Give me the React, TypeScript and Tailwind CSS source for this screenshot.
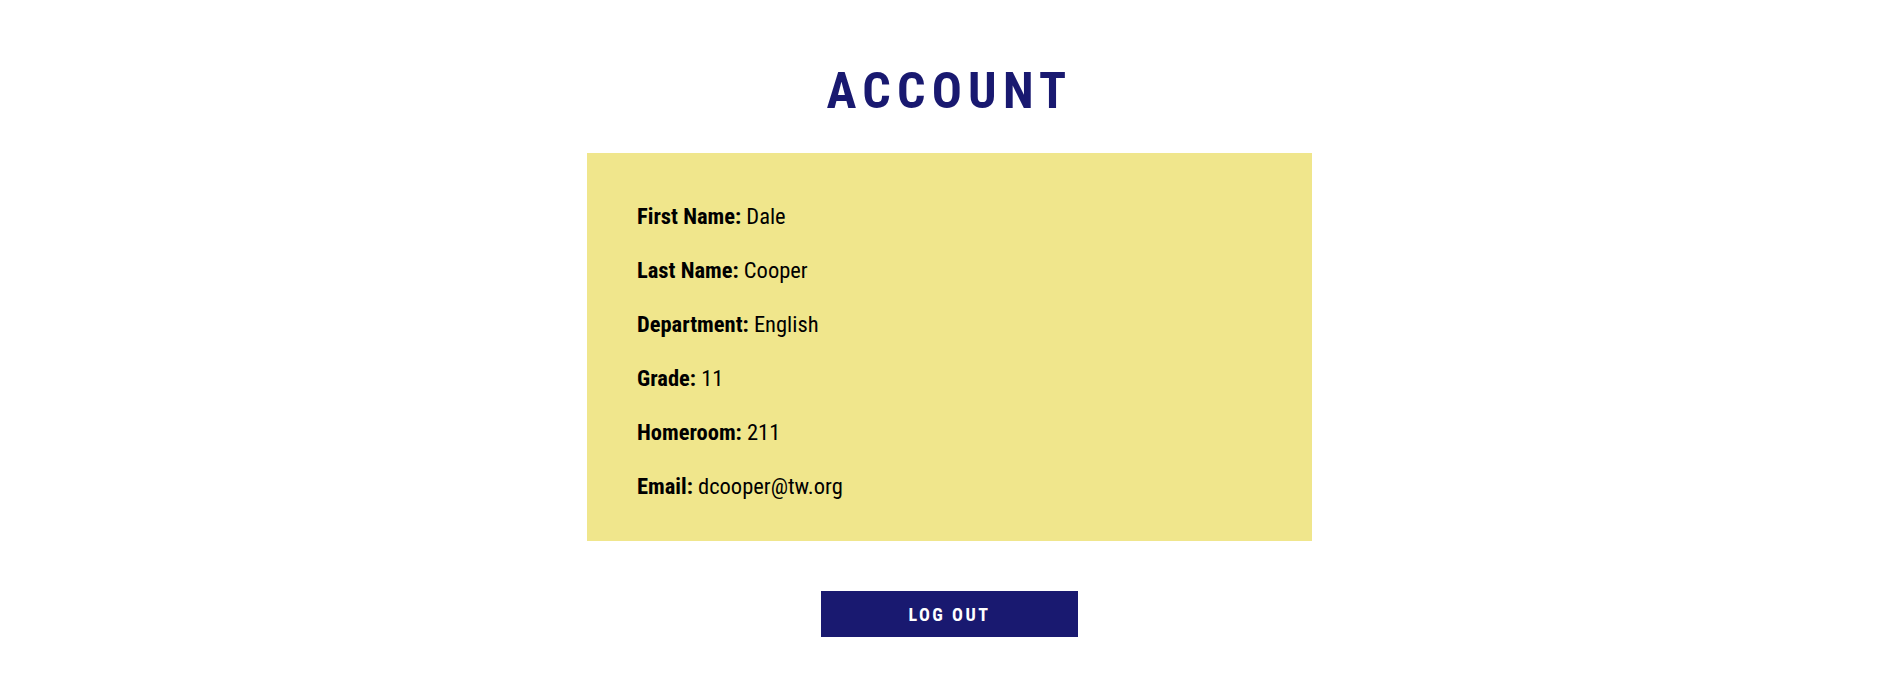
const fields = [
  { label: 'First Name:', value: 'Dale' },
  { label: 'Last Name:', value: 'Cooper' },
  { label: 'Department:', value: 'English' },
  { label: 'Grade:', value: '11' },
  { label: 'Homeroom:', value: '211' },
  { label: 'Email:', value: 'dcooper@tw.org' },
];

export default function App() {
  return (
    <div className="min-h-screen bg-white flex flex-col items-center pt-[66px] font-['Roboto_Condensed',Roboto,sans-serif]">
      <h1 className="text-[50px] leading-none font-bold tracking-[0.125em] text-[#191970]">ACCOUNT</h1>

      <div className="w-[725px] mt-[37px] bg-[#f0e68c] pl-[50px] pr-[50px] pt-[52px] pb-[44px] flex flex-col gap-[32px]">
        {fields.map((f) => (
          <p key={f.label} className="text-[22.5px] leading-[22px] text-black">
            <span className="font-bold">{f.label}</span> {f.value}
          </p>
        ))}
      </div>

      <button className="mt-[50px] w-[257px] h-[46px] bg-[#191970] text-white text-[18px] font-bold tracking-[0.14em] uppercase">
        Log Out
      </button>
    </div>
  );
}
